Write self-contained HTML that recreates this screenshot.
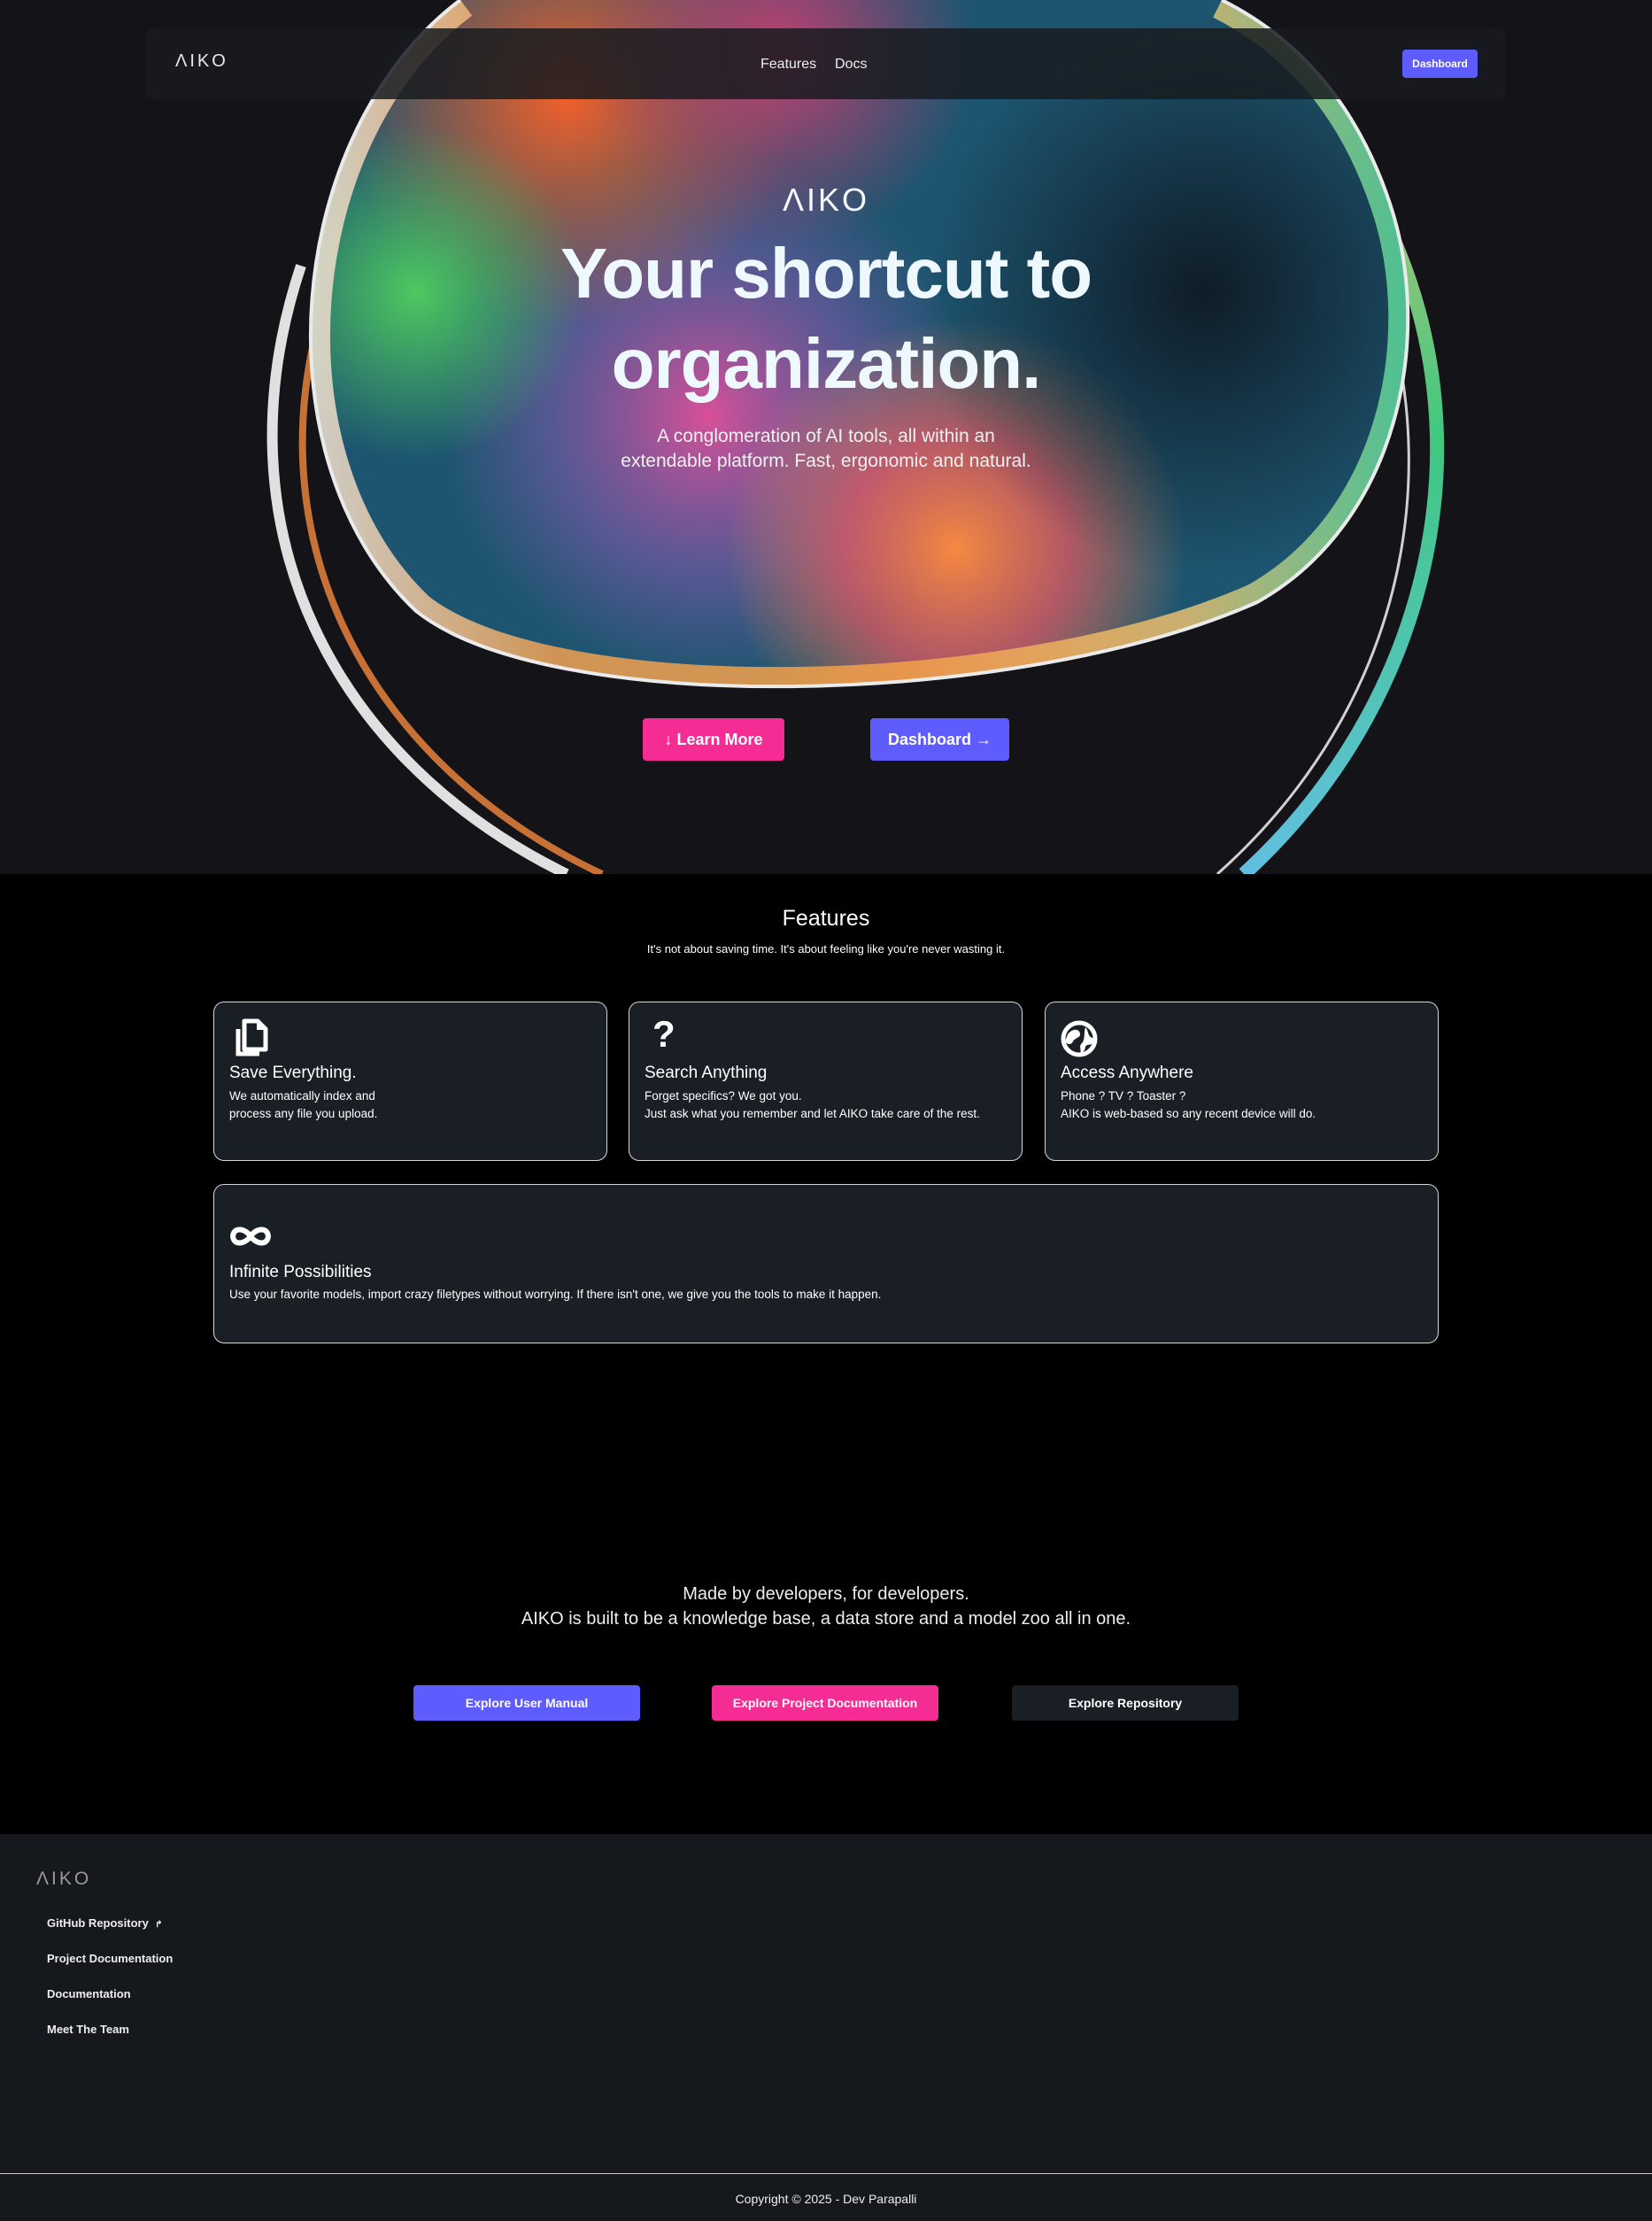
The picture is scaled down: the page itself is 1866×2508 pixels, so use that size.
<!DOCTYPE html>
<html><head><meta charset="utf-8"><style>
*{margin:0;padding:0;box-sizing:border-box}
body{width:1866px;height:2508px;background:#000;font-family:"Liberation Sans",sans-serif;color:#fff;position:relative;overflow:hidden}
.abs{position:absolute}
.hero{left:0;top:0;width:1866px;height:987px;background:#141318;overflow:hidden}
.nav{left:165px;top:32px;width:1535px;height:80px;background:rgba(24,27,32,0.85);border-radius:8px}
.logo{font-weight:100;letter-spacing:3px}
.btn{display:flex;align-items:center;justify-content:center;border-radius:4px;font-weight:bold;color:#fff}
.card{background:#1a1e25;border:1.5px solid #d8d8d8;border-radius:12px}
.card h3{position:absolute;left:17px;font-weight:normal;font-size:19px}
.card p{position:absolute;left:17px;font-size:13.5px;line-height:20px}
.foot a{position:absolute;left:53px;font-size:13px;font-weight:bold;color:#eee}
</style></head><body>
<div class="abs hero">
<svg width="1866" height="987" viewBox="0 0 1866 987">
<defs>
<radialGradient id="g1" cx="640" cy="110" r="260" gradientUnits="userSpaceOnUse"><stop offset="0" stop-color="#f0602a"/><stop offset="1" stop-color="#f0602a" stop-opacity="0"/></radialGradient>
<radialGradient id="g2" cx="470" cy="330" r="190" gradientUnits="userSpaceOnUse"><stop offset="0" stop-color="#4fc860"/><stop offset="1" stop-color="#4fc860" stop-opacity="0"/></radialGradient>
<radialGradient id="g3" cx="800" cy="470" r="300" gradientUnits="userSpaceOnUse"><stop offset="0" stop-color="#d85098"/><stop offset=".6" stop-color="#7a5aa8" stop-opacity=".6"/><stop offset="1" stop-color="#7a5aa8" stop-opacity="0"/></radialGradient>
<radialGradient id="g4" cx="1080" cy="620" r="260" gradientUnits="userSpaceOnUse"><stop offset="0" stop-color="#f58a40"/><stop offset=".5" stop-color="#ee5a60" stop-opacity=".7"/><stop offset="1" stop-color="#f58a40" stop-opacity="0"/></radialGradient>
<radialGradient id="g5" cx="1360" cy="330" r="320" gradientUnits="userSpaceOnUse"><stop offset="0" stop-color="#0f1c26"/><stop offset="1" stop-color="#0f1c26" stop-opacity="0"/></radialGradient>
<radialGradient id="g6" cx="880" cy="60" r="220" gradientUnits="userSpaceOnUse"><stop offset="0" stop-color="#c04070"/><stop offset="1" stop-color="#c04070" stop-opacity="0"/></radialGradient>
<linearGradient id="ring" x1="300" y1="0" x2="1600" y2="0" gradientUnits="userSpaceOnUse"><stop offset="0" stop-color="#f0f0f0"/><stop offset=".25" stop-color="#f0a050"/><stop offset=".55" stop-color="#f4a048"/><stop offset=".8" stop-color="#e8c070"/><stop offset="1" stop-color="#50d8a0"/></linearGradient>
<linearGradient id="ringR" x1="0" y1="0" x2="0" y2="987" gradientUnits="userSpaceOnUse"><stop offset="0" stop-color="#f0c070"/><stop offset=".5" stop-color="#40c880"/><stop offset="1" stop-color="#60c0e0"/></linearGradient>
<clipPath id="blob"><path d="M520 0 C320 150 290 520 470 690 C620 810 1150 800 1420 680 C1580 590 1620 380 1570 230 C1530 110 1460 40 1380 0 Z"/></clipPath>
</defs>
<path d="M340 300 C240 600 380 860 640 987" fill="none" stroke="#e0e0e0" stroke-width="12"/>
<path d="M370 330 C280 600 410 860 680 987" fill="none" stroke="#e8823c" stroke-width="8" opacity=".85"/>
<path d="M1560 240 C1690 500 1610 800 1405 987" fill="none" stroke="url(#ringR)" stroke-width="16"/>
<path d="M1535 260 C1650 520 1585 800 1375 987" fill="none" stroke="#d0d0d0" stroke-width="3"/>
<g clip-path="url(#blob)">
<rect width="1866" height="987" fill="#1d5570"/>
<rect width="1866" height="987" fill="url(#g3)"/>
<rect width="1866" height="987" fill="url(#g1)"/>
<rect width="1866" height="987" fill="url(#g2)"/>
<rect width="1866" height="987" fill="url(#g6)"/>
<rect width="1866" height="987" fill="url(#g4)"/>
<rect width="1866" height="987" fill="url(#g5)"/>
</g>
<path d="M520 0 C320 150 290 520 470 690 C620 810 1150 800 1420 680 C1580 590 1620 380 1570 230 C1530 110 1460 40 1380 0" fill="none" stroke="url(#ring)" stroke-width="44" opacity=".85" clip-path="url(#blob)"/>
<path d="M520 0 C320 150 290 520 470 690 C620 810 1150 800 1420 680 C1580 590 1620 380 1570 230 C1530 110 1460 40 1380 0" fill="none" stroke="#eaeaea" stroke-width="4"/>
</svg>
</div>
<div class="abs nav"></div>
<div class="abs logo" style="left:198px;top:58px;font-size:20px;color:#e8e8e8">ΛIKO</div>
<div class="abs" style="left:859px;top:64px;font-size:16px;color:#eee">Features</div>
<div class="abs" style="left:943px;top:64px;font-size:16px;color:#eee">Docs</div>
<div class="abs btn" style="left:1584px;top:56px;width:85px;height:32px;background:#5f5cfd;font-size:12px">Dashboard</div>
<div class="abs logo" style="left:0;width:1866px;text-align:center;top:205px;font-size:36px;color:#f4f8ff">ΛIKO</div>
<div class="abs" style="left:0;width:1866px;text-align:center;top:258px;font-size:80px;line-height:102px;font-weight:bold;color:#eef8ff;letter-spacing:-1px">Your shortcut to<br>organization.</div>
<div class="abs" style="left:0;width:1866px;text-align:center;top:479px;font-size:21px;line-height:28px;color:#f0f0f0">A conglomeration of AI tools, all within an<br>extendable platform. Fast, ergonomic and natural.</div>
<div class="abs btn" style="left:726px;top:811px;width:160px;height:48px;background:#f42c93;font-size:18px">↓&nbsp;Learn More</div>
<div class="abs btn" style="left:983px;top:811px;width:157px;height:48px;background:#5f5cfd;font-size:18px">Dashboard&nbsp;→</div>

<div class="abs" style="left:0;width:1866px;text-align:center;top:1023px;font-size:25px">Features</div>
<div class="abs" style="left:0;width:1866px;text-align:center;top:1064px;font-size:13px">It's not about saving time. It's about feeling like you're never wasting it.</div>

<div class="abs card" style="left:241px;top:1131px;width:445px;height:180px">
<svg class="abs" style="left:21px;top:18px" width="40" height="46" viewBox="0 0 40 46"><path d="M6 12 V40 H30" fill="none" stroke="#fff" stroke-width="5"/><path d="M13 3 H28 L37 12 V35 H13 Z" fill="none" stroke="#fff" stroke-width="5" stroke-linejoin="round"/><path d="M27 3 V13 H37 Z" fill="#fff"/></svg>
<h3 style="top:69px">Save Everything.</h3>
<p style="top:96px">We automatically index and<br>process any file you upload.</p></div>
<div class="abs card" style="left:710px;top:1131px;width:445px;height:180px">
<div class="abs" style="left:26px;top:12px;font-size:42px;font-weight:bold">?</div>
<h3 style="top:69px">Search Anything</h3>
<p style="top:96px">Forget specifics? We got you.<br>Just ask what you remember and let AIKO take care of the rest.</p></div>
<div class="abs card" style="left:1180px;top:1131px;width:445px;height:180px">
<svg class="abs" style="left:17px;top:20px" width="42" height="42" viewBox="0 0 42 42"><circle cx="21" cy="21" r="18" fill="none" stroke="#fff" stroke-width="5"/><path d="M8 16 C14 8 22 10 22 16 C22 20 16 20 14 24 C12 28 8 28 5 24 Z M28 8 C32 12 30 18 36 20 L38 24 C34 30 30 26 28 30 C28 34 24 38 22 38 C24 32 20 30 24 26 C28 22 26 14 28 8 Z" fill="#fff"/></svg>
<h3 style="top:69px">Access Anywhere</h3>
<p style="top:96px">Phone ? TV ? Toaster ?<br>AIKO is web-based so any recent device will do.</p></div>
<div class="abs card" style="left:241px;top:1337px;width:1384px;height:180px">
<svg class="abs" style="left:16px;top:43px" width="50" height="30" viewBox="0 0 50 30"><path d="M25 15 C19 6 6 4 5 15 C6 26 19 24 25 15 C31 6 44 4 45 15 C44 26 31 24 25 15 Z" fill="none" stroke="#fff" stroke-width="6"/></svg>
<h3 style="top:88px">Infinite Possibilities</h3>
<p style="top:114px">Use your favorite models, import crazy filetypes without worrying. If there isn't one, we give you the tools to make it happen.</p></div>

<div class="abs" style="left:0;width:1866px;text-align:center;top:1786px;font-size:20px;line-height:28px;color:#eee">Made by developers, for developers.<br>AIKO is built to be a knowledge base, a data store and a model zoo all in one.</div>
<div class="abs btn" style="left:467px;top:1903px;width:256px;height:40px;background:#5f5cfd;font-size:14px">Explore User Manual</div>
<div class="abs btn" style="left:804px;top:1903px;width:256px;height:40px;background:#f42c93;font-size:14px">Explore Project Documentation</div>
<div class="abs btn" style="left:1143px;top:1903px;width:256px;height:40px;background:#1a1e25;font-size:14px">Explore Repository</div>

<div class="abs foot" style="left:0;top:2071px;width:1866px;height:437px;background:#15181d">
<div class="abs logo" style="left:41px;top:39px;font-size:21px;color:#999">ΛIKO</div>
<a style="top:93px">GitHub Repository &nbsp;<span style="font-size:10px">↱</span></a>
<a style="top:133px">Project Documentation</a>
<a style="top:173px">Documentation</a>
<a style="top:213px">Meet The Team</a>
<div class="abs" style="left:0;top:383px;width:1866px;height:1px;background:#ccc"></div>
<div class="abs" style="left:0;width:1866px;text-align:center;top:404px;font-size:14px;color:#eee">Copyright © 2025 - Dev Parapalli</div>
</div>
</body></html>
